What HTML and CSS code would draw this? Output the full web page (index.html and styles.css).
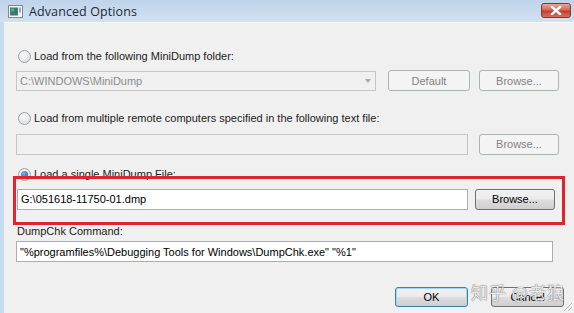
FILE: index.html
```html
<!DOCTYPE html>
<html>
<head>
<meta charset="utf-8">
<link rel="stylesheet" href="styles.css">
</head>
<body>
<div class="window">
  <div class="titlebar">
    <svg class="app-icon" width="15" height="13" viewBox="0 0 15 13">
      <rect x="0.5" y="0.5" width="14" height="12" fill="#f4f6f8" stroke="#7d8a96"/>
      <rect x="2" y="2.5" width="8" height="8" fill="#3f7a6a"/>
      <rect x="3" y="3.5" width="3" height="3" fill="#6aa08e"/>
      <rect x="11" y="2.5" width="2" height="5" fill="#9aa5ae"/>
    </svg>
    <span class="title">Advanced Options</span>
    <div class="close-btn">
      <svg width="14" height="9" viewBox="0 0 14 9">
        <path d="M3 1 L11 8 M11 1 L3 8" stroke="#fff" stroke-width="2.4" stroke-linecap="square"/>
      </svg>
    </div>
  </div>
  <div class="body">
    <div class="radio-row r1"><span class="radio"></span><span class="label">Load from the following MiniDump folder:</span></div>
    <div class="field-row f1">
      <div class="combo disabled"><span>C:\WINDOWS\MiniDump</span><span class="arrow"></span></div>
      <div class="btn disabled b-default">Default</div>
      <div class="btn disabled b-browse1">Browse...</div>
    </div>
    <div class="radio-row r2"><span class="radio"></span><span class="label">Load from multiple remote computers specified in the following text file:</span></div>
    <div class="field-row f2">
      <div class="input disabled w2"></div>
      <div class="btn disabled b-browse2">Browse...</div>
    </div>
    <div class="radio-row r3"><span class="radio checked"></span><span class="label">Load a single MiniDump File:</span></div>
    <div class="field-row f3">
      <div class="input w3">G:\051618-11750-01.dmp</div>
      <div class="btn b-browse3">Browse...</div>
    </div>
    <div class="cmd-label">DumpChk Command:</div>
    <div class="input w4">"%programfiles%\Debugging Tools for Windows\DumpChk.exe" "%1"</div>
    <div class="actions">
      <div class="btn default-btn">OK</div>
      <div class="btn">Cancel</div>
    </div>
  </div>
  <div class="highlight"></div>
  <div class="watermark">知乎 @老狼</div>
  <div class="grip"></div>
</div>
</body>
</html>
```
FILE: styles.css
```css
* { box-sizing: border-box; }
html, body { margin: 0; padding: 0; }
body { width: 574px; height: 313px; overflow: hidden; background: #f0f0f0; }
.window {
  position: relative;
  width: 574px;
  height: 313px;
  background: #f0f0f0;
  border-left: 4px solid #c8daee;
  font-family: "Liberation Sans", Arial, sans-serif;
  font-size: 11px;
  color: #000;
}
.titlebar {
  height: 22px;
  margin-left: -4px;
  background: linear-gradient(#bfd3ea, #d3e1f1);
  display: flex;
  align-items: center;
  padding-left: 8px;
}
.app-icon { display: block; margin-top: 1px; }
.title {
  margin-left: 6px;
  font-family: "Open Sans", "DejaVu Sans", sans-serif;
  font-size: 12.5px;
  color: #1e2a38;
  letter-spacing: 0.1px;
}
.close-btn {
  margin-left: auto;
  margin-right: 3px;
  margin-top: -2px;
  width: 30px;
  height: 15px;
  border: 1px solid #7a3a35;
  border-radius: 3px;
  background: linear-gradient(#e9a89c 0%, #d8675a 45%, #c23c2e 55%, #d86f5c 100%);
  display: flex;
  align-items: center;
  justify-content: center;
}
.close-btn svg { display: block; }
.body { padding-left: 12px; border-top: 1px solid #fafafa; }
.radio-row { display: flex; align-items: center; height: 14px; }
.r1 { margin-top: 26px; }
.r2 { margin-top: 20px; }
.r3 { margin-top: 12px; }
.radio {
  width: 13px; height: 13px;
  border-radius: 50%;
  border: 1px solid #9ea3a8;
  background: radial-gradient(circle at 40% 35%, #fbfbfb, #d4d6d8);
  margin-left: 2px;
  margin-right: 3px;
  position: relative;
}
.radio.checked::after {
  content: "";
  position: absolute;
  left: 2px; top: 2px;
  width: 7px; height: 7px;
  border-radius: 50%;
  background: radial-gradient(circle at 40% 35%, #7fb3e8, #1a4f8c);
}
.label { color: #222; }
.field-row { display: flex; align-items: center; }
.f1 { margin-top: 7px; height: 21px; }
.f2 { margin-top: 8px; height: 22px; }
.f3 { margin-top: 7px; height: 22px; }
.combo, .input {
  height: 20px;
  border: 1px solid #abadb3;
  background: #fff;
  display: flex;
  align-items: center;
  padding-left: 3px;
  color: #000;
}
.disabled.combo, .disabled.input { background: #f0f0f0; color: #8d8d8d; border-color: #c6c6c6; }
.combo { width: 360px; justify-content: space-between; padding-right: 4px; }
.arrow {
  width: 0; height: 0;
  border-left: 3.5px solid transparent;
  border-right: 3.5px solid transparent;
  border-top: 4px solid #a8a8a8;
}
.w2 { width: 452px; height: 21px; }
.w3 { width: 451px; height: 21px; margin-left: 1px; }
.w4 { width: 537px; height: 21px; margin-top: 3px; }
.btn {
  height: 21px;
  width: 80px;
  border: 1px solid #707070;
  border-radius: 3px;
  background: linear-gradient(#f2f2f2 0%, #ebebeb 48%, #dddddd 52%, #cfcfcf 100%);
  display: flex;
  align-items: center;
  justify-content: center;
  color: #000;
}
.btn.disabled { background: #f4f4f4; border-color: #adb2b5; color: #838383; }
.b-default { margin-left: 12px; width: 82px; }
.b-browse1 { margin-left: 9px; }
.b-browse2 { margin-left: 11px; }
.b-browse3 { margin-left: 7px; }
.cmd-label { margin-top: 14px; height: 14px; line-height: 14px; color: #222; padding-left: 1px; }
.actions { display: flex; margin-top: 25px; padding-left: 379px; gap: 23px; }
.actions .btn { width: 73px; height: 20px; }
.default-btn { border-color: #3c7fb1; box-shadow: inset 0 0 0 1px #9fd8f5; }
.highlight {
  position: absolute;
  left: 9px; top: 176px;
  width: 552px; height: 49px;
  border: 3px solid #e0232e;
}
.watermark {
  position: absolute;
  left: 467px; top: 279px;
  font-family: "Noto Sans CJK SC", sans-serif;
  font-size: 17px;
  color: rgba(255,255,255,0.85);
  text-shadow: 0 0 1px #777, 0 0 1px #777;
  letter-spacing: 1px;
}
.grip {
  position: absolute;
  right: 2px; bottom: 2px;
  width: 8px; height: 8px;
  background: linear-gradient(135deg, transparent 45%, #b8b8b8 45%, #b8b8b8 55%, transparent 55%, transparent 70%, #b8b8b8 70%, #b8b8b8 80%, transparent 80%);
}
```
